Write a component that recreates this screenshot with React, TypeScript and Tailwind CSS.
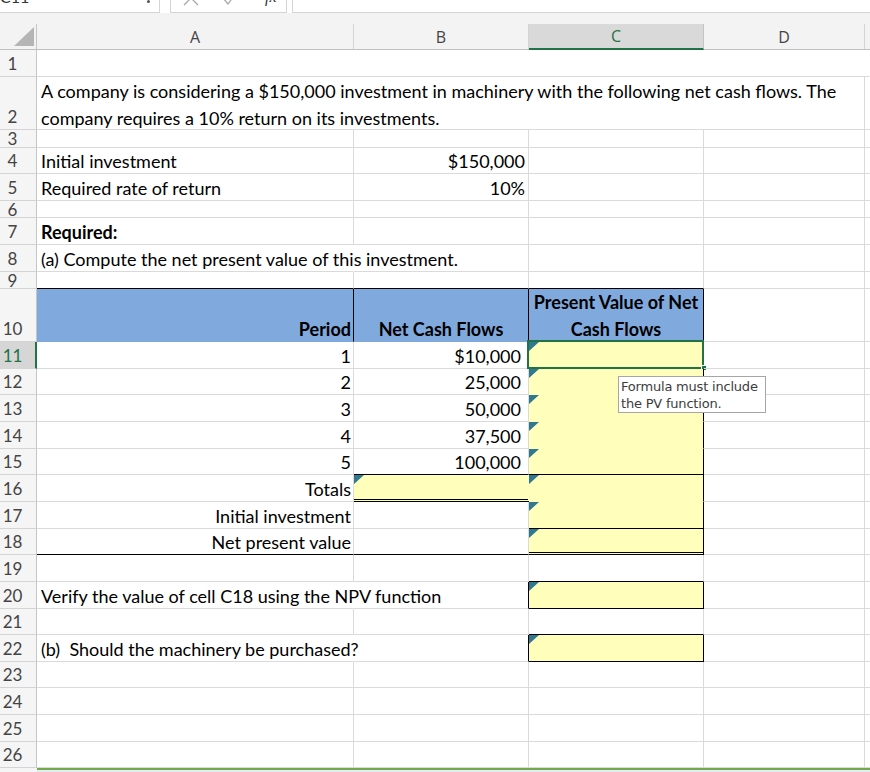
import * as React from 'react'
import clsx from 'clsx'

// column widths (each includes its own right gridline)
const A = 'w-[317px]'
const B = 'w-[175px]'
const C = 'w-[175px]'
const D = 'w-[161px]'

function Tri() {
  return (
    <svg className="absolute left-0 top-0" width="10" height="9" viewBox="0 0 10 9">
      <path d="M0 0H10L0 9Z" fill="#2f7890" />
    </svg>
  )
}

type CellProps = {
  w?: string
  className?: string
  children?: React.ReactNode
  tri?: boolean
}

function Cell({ w = 'flex-1', className, children, tri }: CellProps) {
  return (
    <div
      className={clsx(
        'relative flex shrink-0 items-end whitespace-nowrap border-b border-r border-[#dadada] px-[4px] pb-[2px] leading-[20px]',
        w,
        className
      )}
    >
      {tri && <Tri />}
      {children}
    </div>
  )
}

function RowHead({ n, sel, short }: { n: number; sel?: boolean; short?: boolean }) {
  return (
    <div
      className={clsx(
        'flex w-[37px] shrink-0 overflow-hidden border-b border-b-[#d4d4d4] text-[17px]',
        short ? 'items-start pt-[2px] leading-[14px]' : 'items-end pb-[2px] leading-[20px]',
        sel
          ? 'border-r-2 border-r-[#217346] bg-[#d6d6d6] text-[#217346]'
          : 'border-r border-r-[#c6c6c6] bg-[#f5f5f5] text-[#444]'
      )}
    >
      <span className="w-[25px] text-center">{n}</span>
    </div>
  )
}

function Row({ n, h, sel, short, children }: { n: number; h: string; sel?: boolean; short?: boolean; children?: React.ReactNode }) {
  return (
    <div className={clsx('flex', h)}>
      <RowHead n={n} sel={sel} short={short} />
      {children}
    </div>
  )
}

function Blank({ n, h, short }: { n: number; h: string; short?: boolean }) {
  return (
    <Row n={n} h={h} short={short}>
      <Cell w={A} />
      <Cell w={B} />
      <Cell w={C} />
      <Cell w={D} />
      <Cell />
    </Row>
  )
}

const flows = [
  ['1', '$10,000'],
  ['2', '25,000'],
  ['3', '50,000'],
  ['4', '37,500'],
  ['5', '100,000'],
]
const flowHeights = ['h-[27px]', 'h-[26px]', 'h-[27px]', 'h-[27px]', 'h-[26px]']

export default function App() {
  return (
    <div className="relative h-[772px] w-[870px] overflow-hidden bg-white font-['Lato',sans-serif] text-[18px] text-black">
      {/* formula bar, cut off at the top */}
      <div className="flex h-[13px] overflow-hidden bg-white">
        <div className="relative w-[160px] border-b border-r border-[#d4d4d4]">
          <span className="absolute -top-[11px] left-[0px] text-[16px] leading-[16px] text-[#333]">C11</span>
          <span className="absolute left-[147px] top-0 h-[3px] w-[3px] rounded-full bg-[#555]" />
        </div>
        <div className="ml-[10px] flex w-[117px] items-start gap-[24px] border-b border-l border-r border-[#d4d4d4] pl-[12px]">
          <svg width="16" height="6" viewBox="0 0 16 6">
            <path d="M1 -9L15 5M15 -9L1 5" stroke="#a3a3a3" strokeWidth="1.2" fill="none" />
          </svg>
          <svg width="10" height="6" viewBox="0 0 10 6">
            <path d="M0 -2L5 4L10 -3" stroke="#a3a3a3" strokeWidth="1.2" fill="none" />
          </svg>
          <span className="-mt-[11px] ml-[8px] font-['Liberation_Serif',serif] text-[16px] italic leading-[16px] text-[#333]">fx</span>
        </div>
        <div className="ml-[5px] flex-1 border-b border-l border-[#d4d4d4]" />
      </div>

      {/* column headers */}
      <div className="bg-[#f3f3f3] pt-[11px]">
        <div className="flex h-[26px] border-b border-[#bfbfbf] font-['Open_Sans',sans-serif] text-[16px] text-[#444]">
          <div className="relative w-[37px] border-r border-[#c6c6c6]">
            <svg className="absolute left-[14px] top-[3px]" width="20" height="19" viewBox="0 0 20 19">
              <path d="M20 0V19H0Z" fill="#b5b5b5" />
            </svg>
          </div>
          <div className={clsx(A, 'flex items-center justify-center border-r border-[#d4d4d4]')}>A</div>
          <div className={clsx(B, 'flex items-center justify-center border-r border-[#d4d4d4]')}>B</div>
          <div className={clsx(C, '-mb-px flex items-center justify-center border-b-2 border-r border-b-[#217346] border-r-[#c4c4c4] bg-[#d9d9d9] text-[#217346]')}>C</div>
          <div className={clsx(D, 'flex items-center justify-center border-r border-[#d4d4d4]')}>D</div>
          <div className="flex-1" />
        </div>
      </div>

      {/* sheet */}
      <div className="relative">
        <Row n={1} h="h-[27px]">
          <Cell className="border-r-transparent" />
        </Row>
        <Row n={2} h="h-[53px]">
          <Cell w="w-[828px]">
            <div className="-mb-[5px] leading-[27px]">
              <div>A company is considering a $150,000 investment in machinery with the following net cash flows. The</div>
              <div>company requires a 10% return on its investments.</div>
            </div>
          </Cell>
          <Cell />
        </Row>
        <Blank n={3} h="h-[18px]" short />
        <Row n={4} h="h-[26px]">
          <Cell w={A}>Initial investment</Cell>
          <Cell w={B} className="justify-end pr-[3px]">$150,000</Cell>
          <Cell w={C} />
          <Cell w={D} />
          <Cell />
        </Row>
        <Row n={5} h="h-[27px]">
          <Cell w={A}>Required rate of return</Cell>
          <Cell w={B} className="justify-end pr-[3px]">10%</Cell>
          <Cell w={C} />
          <Cell w={D} />
          <Cell />
        </Row>
        <Blank n={6} h="h-[17px]" short />
        <Row n={7} h="h-[27px]">
          <Cell w={A} className="font-bold">Required:</Cell>
          <Cell w={B} />
          <Cell w={C} />
          <Cell w={D} />
          <Cell />
        </Row>
        <Row n={8} h="h-[27px]">
          <Cell w={A} className="border-r-transparent">(a) Compute the net present value of this investment.</Cell>
          <Cell w={B} />
          <Cell w={C} />
          <Cell w={D} />
          <Cell />
        </Row>
        <Row n={9} h="h-[17px]" short>
          <Cell w={A} className="border-b-black" />
          <Cell w={B} className="border-b-black" />
          <Cell w={C} className="border-b-black" />
          <Cell w={D} />
          <Cell />
        </Row>
        <Row n={10} h="h-[53px]">
          <Cell w={A} className="justify-end border-b-transparent border-r-black bg-[#80aadd] pr-[2px] font-bold">Period</Cell>
          <Cell w={B} className="justify-center border-b-transparent border-r-black bg-[#80aadd] font-bold">Net Cash Flows</Cell>
          <Cell w={C} className="justify-center border-b-transparent border-r-black bg-[#80aadd] font-bold">
            <div className="-mb-[4px] text-center leading-[27px]">
              <div>Present Value of Net</div>
              <div>Cash Flows</div>
            </div>
          </Cell>
          <Cell w={D} />
          <Cell />
        </Row>
        {flows.map(([p, v], i) => (
          <Row key={p} n={11 + i} h={flowHeights[i]} sel={i === 0}>
            <Cell w={A} className="justify-end pr-[2px]">{p}</Cell>
            <Cell w={B} className={clsx('justify-end pr-[7px]', i === 4 && 'border-b-black')}>{v}</Cell>
            <Cell
              w={C}
              tri
              className={clsx('border-r-black bg-[#ffffbb]', i === 4 ? 'border-b-black' : 'border-b-transparent')}
            >
              {i === 0 && (
                <>
                  <div className="absolute -left-[2px] -top-[2px] -bottom-[1px] -right-[1px] border-2 border-[#217346]" />
                  <div className="absolute -bottom-[3px] -right-[4px] h-[6px] w-[6px] border border-white bg-[#217346]" />
                </>
              )}
            </Cell>
            <Cell w={D} />
            <Cell />
          </Row>
        ))}
        <Row n={16} h="h-[27px]">
          <Cell w={A} className="justify-end pr-[2px]">Totals</Cell>
          <Cell w={B} tri className="border-b-[3px] border-double border-b-black border-r-transparent bg-[#ffffbb]" />
          <Cell w={C} tri className="border-b-transparent border-r-black bg-[#ffffbb]" />
          <Cell w={D} />
          <Cell />
        </Row>
        <Row n={17} h="h-[27px]">
          <Cell w={A} className="justify-end pr-[2px]">Initial investment</Cell>
          <Cell w={B} />
          <Cell w={C} tri className="border-b-black border-r-black bg-[#ffffbb]" />
          <Cell w={D} />
          <Cell />
        </Row>
        <Row n={18} h="h-[26px]">
          <Cell w={A} className="justify-end border-b-black pr-[2px]">Net present value</Cell>
          <Cell w={B} className="border-b-black" />
          <Cell w={C} tri className="border-b-[3px] border-double border-b-black border-r-black bg-[#ffffbb]" />
          <Cell w={D} />
          <Cell />
        </Row>
        <Row n={19} h="h-[27px]">
          <Cell w={A} />
          <Cell w={B} />
          <Cell w={C} className="border-b-black" />
          <Cell w={D} />
          <Cell />
        </Row>
        <Row n={20} h="h-[27px]">
          <Cell w={A} className="border-r-transparent">Verify the value of cell C18 using the NPV function</Cell>
          <Cell w={B} className="border-r-black" />
          <Cell w={C} tri className="border-b-black border-r-black bg-[#ffffbb]" />
          <Cell w={D} />
          <Cell />
        </Row>
        <Row n={21} h="h-[26px]">
          <Cell w={A} />
          <Cell w={B} />
          <Cell w={C} className="border-b-black" />
          <Cell w={D} />
          <Cell />
        </Row>
        <Row n={22} h="h-[27px]">
          <Cell w={A} className="border-r-transparent">(b)&nbsp; Should the machinery be purchased?</Cell>
          <Cell w={B} className="border-r-black" />
          <Cell w={C} tri className="border-b-black border-r-black bg-[#ffffbb]" />
          <Cell w={D} />
          <Cell />
        </Row>
        <Blank n={23} h="h-[26px]" />
        <Blank n={24} h="h-[27px]" />
        <Blank n={25} h="h-[27px]" />
        <Blank n={26} h="h-[26px]" />
        <div className="flex h-[10px]">
          <div className="w-[37px] bg-[#f5f5f5]" />
          <div className="flex-1 border-t-2 border-[#72aa4c] bg-[#e6eaf3]" />
        </div>

        {/* input message for C11 */}
        <div className="absolute left-[618px] top-[326px] h-[37px] w-[148px] border border-[#a6a6a6] bg-white px-[2px] pt-[1px] font-['DejaVu_Sans',sans-serif] text-[13px] leading-[17px] tracking-[-0.2px] text-[#3c3c3c]">
          <div>Formula must include</div>
          <div>the PV function.</div>
        </div>
      </div>
    </div>
  )
}
